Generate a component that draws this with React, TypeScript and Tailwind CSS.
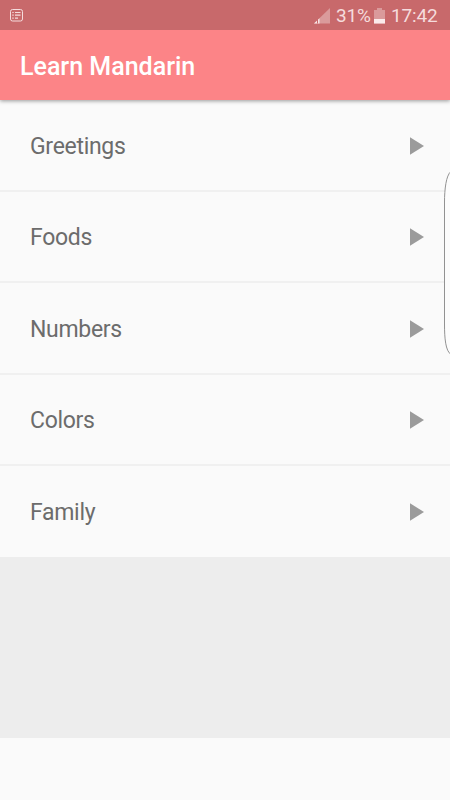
const lessons = ["Greetings", "Foods", "Numbers", "Colors", "Family"];

function StatusBar() {
  return (
    <div className="z-20 flex h-[30px] items-center bg-[#c8696b] pl-[10px] pr-3 text-[#f5dcdd]">
      <svg width="13" height="13" viewBox="0 0 13 13" fill="none" stroke="currentColor" strokeWidth="1">
        <rect x="0.5" y="0.5" width="12" height="11.5" rx="2" />
        <path d="M2.3 3.5h1.4M5 3.5h5.5M2.3 6.2h1.4M5 6.2h5.5M2.3 9.2h1.4M5 9.2h3" strokeWidth="1.2" />
      </svg>
      <svg className="ml-auto mt-px" width="16" height="16" viewBox="0 0 16 16">
        <path d="M0 15.5 16 0v15.5Z" fill="#da9a9b" />
        <path d="M0 15.5 5.5 10.2v5.3Z" fill="#f8e4e4" />
        <path d="M3.5 11v4.5" stroke="#c8696b" />
      </svg>
      <span className="ml-[6px] w-[35px] whitespace-nowrap pt-[2px] text-[19px] leading-7 tracking-[-0.2px]">31%</span>
      <svg className="ml-[3px] mt-px" width="11" height="16" viewBox="0 0 11 16">
        <path d="M3 0h5v2h3v13.500H0V2h3Z" fill="#da9a9b" />
        <path d="M0 11h11v4.500H0Z" fill="#fbebeb" />
      </svg>
      <span className="ml-[6px] w-[47px] whitespace-nowrap pt-[2px] text-[19px] leading-7 tracking-[-0.15px]">17:42</span>
    </div>
  );
}

function LessonRow({ title }: { title: string }) {
  return (
    <li className="flex flex-1 items-center justify-between border-b-2 border-[#f0f0f0] pl-[30px] pr-[26px] pt-[2px] last:border-transparent">
      <span className="pt-[2px] text-[23px] leading-7 tracking-[-0.3px] text-[#6c6c6c]">{title}</span>
      <svg width="14" height="18" viewBox="0 0 14 18">
        <path d="M0 0.300 14 9 0 17.700Z" fill="#9b9b9b" />
      </svg>
    </li>
  );
}

export default function App() {
  return (
    <div className="relative flex h-[800px] w-[450px] flex-col overflow-hidden bg-[#fafafa] font-['Roboto',sans-serif]">
      <StatusBar />
      <header className="z-10 flex h-[70px] items-center bg-[#fc8487] px-5 pt-[4px] shadow-[0_1px_4px_rgba(0,0,0,0.4)]">
        <h1 className="text-[25px] font-medium leading-8 text-white">Learn Mandarin</h1>
      </header>
      <ul className="flex h-[457.500px] flex-col">
        {lessons.map((title) => (
          <LessonRow key={title} title={title} />
        ))}
      </ul>
      <div className="-mt-px h-[181px] bg-[#ededed]" />
      <svg className="absolute right-0 top-[170px]" width="8" height="186" viewBox="0 0 8 186">
        <path d="M9 1.500C4 5 2.500 20 2.500 32v122c0 14 1 27 6.500 30.500" fill="#fcfcfc" stroke="#929292" />
      </svg>
    </div>
  );
}
